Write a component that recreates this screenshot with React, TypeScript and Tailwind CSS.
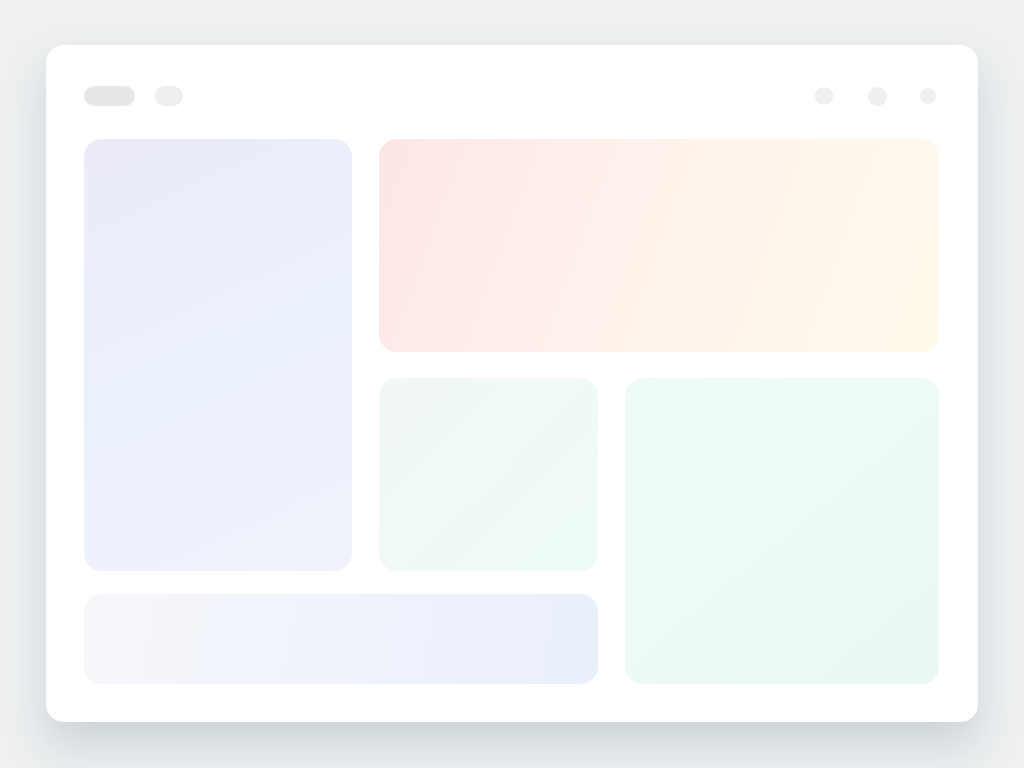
export default function App() {
  return (
    <div className="min-h-screen w-full bg-[#eef0f1] pt-[45px] pl-[46px]">
      <div className="w-[932px] h-[677px] rounded-[18px] bg-white p-[38px] pt-[41px] shadow-[0_24px_40px_rgba(150,165,175,0.38)]">
        {/* top bar */}
        <div className="flex h-[20px] items-center justify-between">
          <div className="flex items-center gap-[20px]">
            <div className="h-[20px] w-[51px] rounded-full bg-[#e6e7e9]" />
            <div className="h-[20px] w-[28px] rounded-full bg-[#efefef]" />
          </div>
          <div className="flex items-center pr-[4px]">
            <div className="h-[18px] w-[18px] rounded-full bg-[#efefef]" />
            <div className="ml-[35px] h-[19px] w-[19px] rounded-full bg-[#efefef]" />
            <div className="ml-[33px] h-[16px] w-[16px] rounded-full bg-[#efefef]" />
          </div>
        </div>

        {/* tiles */}
        <div className="mt-[33px] grid grid-cols-[268px_219px_314px] grid-rows-[213px_196px_90px] gap-x-[27px] gap-y-[23px]">
          <div className="col-start-1 row-start-1 row-span-2 rounded-[18px] bg-linear-[155deg] from-[#ebeafa] via-[#ebf1fc] to-[#f0f2fb]" />
          <div className="col-start-2 col-span-2 row-start-1 rounded-[18px] bg-linear-[110deg] from-[#fde6e4] via-[#fff3ec] to-[#fffaec]" />
          <div className="col-start-2 row-start-2 mt-[3px] rounded-[18px] bg-linear-[135deg] from-[#f2f8f4] to-[#eefbf5]" />
          <div className="col-start-3 row-start-2 row-span-2 mt-[3px] rounded-[18px] bg-linear-[140deg] from-[#effcf6] via-[#edfaf5] to-[#e9f8f3]" />
          <div className="col-start-1 col-span-2 row-start-3 rounded-[18px] bg-linear-[100deg] from-[#f6f7fb] via-[#f0f3fc] to-[#e9effb]" />
        </div>
      </div>
    </div>
  )
}
